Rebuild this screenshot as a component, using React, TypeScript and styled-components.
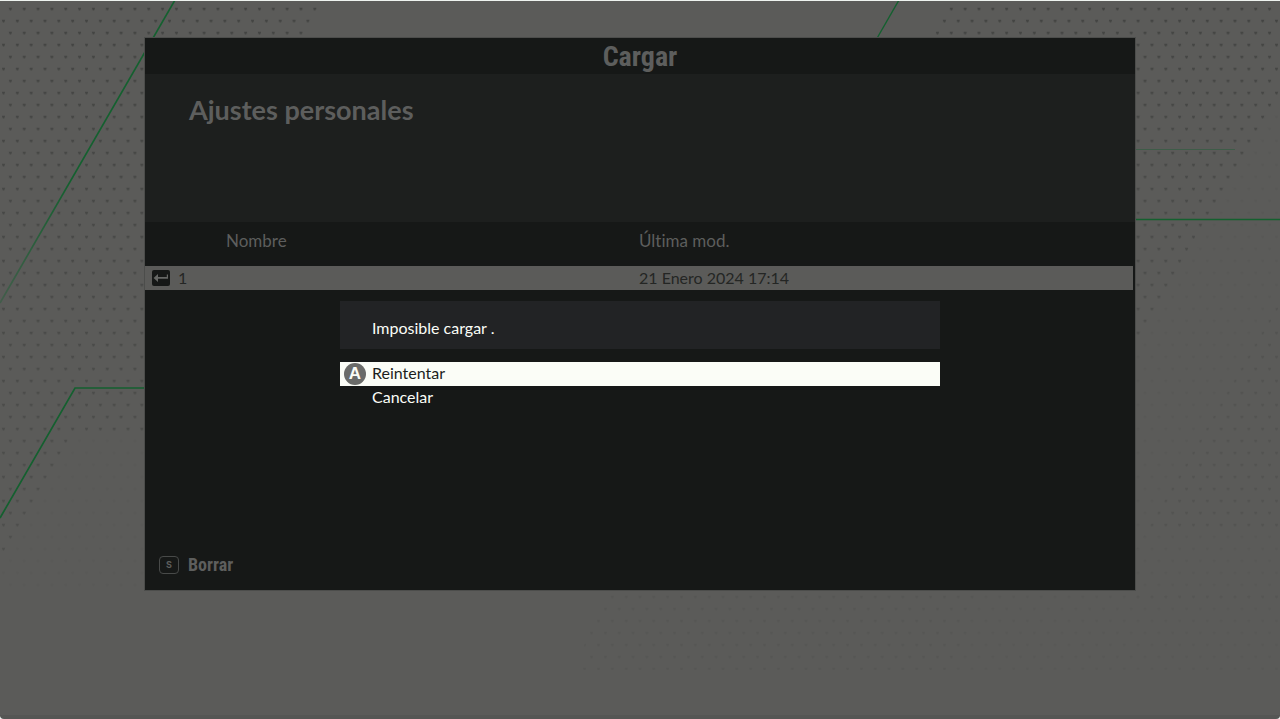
import React from "react";
import styled, { createGlobalStyle } from "styled-components";

const color = {
  backdrop: "#5b5b59",
  panel: "#161817",
  section: "#1d1f1e",
  muted: "#5d5e5d",
  line: "#14602f",
  edge: "#eef3ef",
  white: "#fbfdf7",
};

const GlobalStyle = createGlobalStyle`
  * { box-sizing: border-box; }
  body {
    margin: 0;
    background: ${color.edge};
    font-family: Lato, "Open Sans", sans-serif;
    font-variant-ligatures: none;
  }
  button { font: inherit; color: inherit; background: none; border: 0; padding: 0; cursor: pointer; }
`;

const Screen = styled.div`
  position: relative;
  min-height: 100vh;
  padding: 37px 145px 48px;
  border-top: 1px solid ${color.edge};
  border-bottom: 4px solid #555654;
  border-radius: 0 0 4px 4px;
  background: ${color.backdrop};
  overflow: hidden;
`;

const Backdrop = styled.svg`
  position: absolute;
  top: -1px;
  left: 0;
  width: 100%;
  height: calc(100% + 5px);
`;

const Panel = styled.main`
  position: relative;
  display: flex;
  flex-direction: column;
  min-height: 552px;
  background: ${color.panel};
  color: ${color.muted};
  box-shadow: 0 0 0 1px #4c4d4b;
`;

const Title = styled.h1`
  margin: 0;
  height: 36px;
  line-height: 38px;
  text-align: center;
  font-family: "Liberation Sans Narrow", "Roboto Condensed", sans-serif;
  font-size: 28px;
  font-weight: 700;
`;

const Section = styled.section`
  height: 148px;
  padding: 19px 44px;
  background: ${color.section};
`;

const Heading = styled.h2`
  margin: 0;
  font-size: 27px;
  line-height: 34px;
  font-weight: 700;
`;

const SaveTable = styled.table`
  width: calc(100% - 2px);
  table-layout: fixed;
  border-collapse: collapse;
  font-size: 16px;
  line-height: 24px;
`;

const HeadCell = styled.th<{ $inset?: boolean }>`
  height: 44px;
  padding: 0 0 6px ${(p) => (p.$inset ? "81px" : "0")};
  text-align: left;
  font-size: 17px;
  font-weight: 400;
`;

const SaveRow = styled.tr`
  height: 24px;
  background: ${color.backdrop};
  color: #242624;
`;

const SaveCell = styled.td`
  padding: 0;
`;

const SaveName = styled.span`
  display: flex;
  align-items: center;
  gap: 8px;
  padding-left: 7px;
`;

const Footer = styled.footer`
  margin-top: auto;
  padding: 0 14px 13px;
`;

const KeyButton = styled.button`
  display: flex;
  align-items: center;
  gap: 9px;
  font-family: "Liberation Sans Narrow", "Roboto Condensed", sans-serif;
  font-size: 18px;
  line-height: 24px;
  font-weight: 700;
`;

const KeyCap = styled.kbd`
  width: 20px;
  height: 18px;
  border: 1px solid #484a49;
  border-radius: 4px;
  text-align: center;
  font: 700 9px/16px Inter, sans-serif;
`;

const Dialog = styled.div`
  position: absolute;
  top: 263px;
  left: 50%;
  width: 600px;
  transform: translateX(-50%);
  color: ${color.white};
  font-size: 16px;
  line-height: 24px;
`;

const Message = styled.p`
  margin: 0 0 13px;
  height: 48px;
  padding: 15px 32px;
  background: #222325;
`;

const Option = styled.button<{ $selected?: boolean }>`
  display: flex;
  align-items: flex-start;
  gap: 6px;
  width: 100%;
  height: 24px;
  line-height: 22px;
  padding-left: ${(p) => (p.$selected ? "4px" : "32px")};
  background: ${(p) => (p.$selected ? color.white : "transparent")};
  color: ${(p) => (p.$selected ? "#1c1e1d" : color.white)};
  text-align: left;
`;

const Badge = styled.span`
  width: 22px;
  height: 22px;
  margin-top: 1px;
  border-radius: 50%;
  background: #6a6b69;
  color: ${color.white};
  text-align: center;
  font: 700 17px/22px "Liberation Sans", sans-serif;
`;

const EnterIcon = () => (
  <svg width="18" height="16" viewBox="0 0 18 16" aria-hidden="true">
    <rect width="18" height="16" rx="2" fill="#161817" />
    <path d="M1.6 8l4.4-4v3h8.8V4.4H16v4.4H6V12z" fill="#666765" />
  </svg>
);

const Scenery = () => (
  <Backdrop viewBox="0 0 1280 719" preserveAspectRatio="xMidYMid slice" aria-hidden="true">
    <defs>
      <pattern id="dots" width="13.837" height="24" patternUnits="userSpaceOnUse">
        <path d="M8.7 7.8h3.4l-1 2.8h-1.4zM1.8 19.8h3.4l-1 2.8H2.8z" fill="#434442" />
      </pattern>
      <linearGradient id="fadeDown" x1="0" y1="0" x2="0" y2="1">
        <stop offset="0" stopColor="#fff" />
        <stop offset="1" stopColor="#fff" stopOpacity="0.5" />
      </linearGradient>
      <linearGradient id="fadeLeft" gradientUnits="userSpaceOnUse" x1="175" y1="0" x2="0" y2="303">
        <stop offset="0" stopColor={color.line} />
        <stop offset="0.6" stopColor={color.line} />
        <stop offset="1" stopColor={color.line} stopOpacity="0.35" />
      </linearGradient>
      <mask id="strong" maskUnits="userSpaceOnUse" x="0" y="0" width="1280" height="719">
        <path d="M0 0H322L300 38H145V435H71L0 558z" fill="url(#fadeDown)" />
        <path d="M954 0H1280V106L1135 357V60H920z" fill="url(#fadeDown)" />
      </mask>
    </defs>
    <rect width="1280" height="719" fill="url(#dots)" mask="url(#strong)" />
    <path d="M0 558L71 435H145V590H0z" fill="url(#dots)" opacity="0.1" />
    <path d="M1280 106V302L1135 553V357z" fill="url(#dots)" opacity="0.12" />
    <path d="M1280 302V530H1148z" fill="url(#dots)" opacity="0.35" />
    <path d="M1135 530H1280V600H1135z" fill="url(#dots)" opacity="0.12" />
    <path d="M605 589H985L950 670H575z" fill="url(#dots)" opacity="0.2" />
    <path d="M985 589H1280V670H950z" fill="url(#dots)" opacity="0.12" />
    <g fill="none" stroke={color.line}>
      <path d="M175 0L0 303" stroke="url(#fadeLeft)" strokeWidth="1.7" />
      <path d="M899 0L876 40" strokeWidth="1.4" />
      <path d="M0 518L75 388H145" strokeWidth="1.7" />
      <path d="M1135 219.5H1280" strokeWidth="1.5" />
      <path d="M1135 149.5H1235" opacity="0.4" />
    </g>
  </Backdrop>
);

export default function App() {
  return (
    <>
      <GlobalStyle />
      <Screen>
        <Scenery />
        <Panel>
          <Title>Cargar</Title>
          <Section>
            <Heading>Ajustes personales</Heading>
          </Section>
          <SaveTable>
            <thead>
              <tr>
                <HeadCell $inset>Nombre</HeadCell>
                <HeadCell>Última mod.</HeadCell>
              </tr>
            </thead>
            <tbody>
              <SaveRow>
                <SaveCell>
                  <SaveName>
                    <EnterIcon />1
                  </SaveName>
                </SaveCell>
                <SaveCell>21 Enero 2024 17:14</SaveCell>
              </SaveRow>
            </tbody>
          </SaveTable>
          <Footer>
            <KeyButton type="button">
              <KeyCap>S</KeyCap>Borrar
            </KeyButton>
          </Footer>
          <Dialog role="alertdialog" aria-labelledby="message">
            <Message id="message">Imposible cargar .</Message>
            <Option type="button" $selected>
              <Badge aria-hidden="true">A</Badge>Reintentar
            </Option>
            <Option type="button">Cancelar</Option>
          </Dialog>
        </Panel>
      </Screen>
    </>
  );
}
